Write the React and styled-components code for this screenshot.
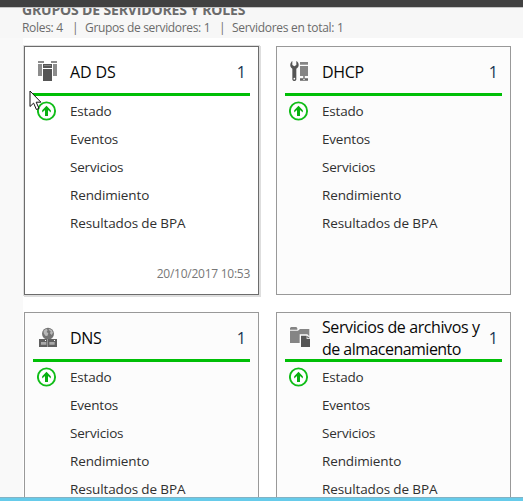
import React from "react";
import styled, { createGlobalStyle } from "styled-components";

const GlobalStyle = createGlobalStyle`
  * { box-sizing: border-box; }
  body { margin: 0; background: #fff; overflow: hidden; }
`;

const Window = styled.div`
  position: relative;
  width: 523px;
  height: 501px;
  overflow: hidden;
  display: flex;
  flex-direction: column;
  background: #fff;
  font-family: "Open Sans", "Noto Sans", sans-serif;
  white-space: nowrap;
`;

const TopBar = styled.div`
  flex: none;
  height: 8px;
  background: #414141;
  border-bottom: 1px solid #c4c4c4;
`;

const Header = styled.header`
  flex: none;
  height: 30px;
  padding-left: 22px;
  overflow: hidden;
  background: #f7f7f7;
  color: #6b6b6b;
`;

const Heading = styled.h1`
  margin: -8px 0 0;
  font-size: 14px;
  line-height: 20px;
  font-weight: 700;
  letter-spacing: -0.16px;
`;

const Summary = styled.div`
  display: flex;
  margin-top: -1px;
  font-size: 12px;
  line-height: 18px;
`;

const SummaryItem = styled.span`
  width: ${(p) => p.$width}px;
  letter-spacing: ${(p) => p.$spacing || 0}px;
`;

const Content = styled.main`
  flex: 1;
  min-height: 0;
  overflow: hidden;
  display: flex;
`;

const Gutter = styled.div`
  flex: none;
  width: 23px;
  background: #f9f9f9;
`;

const Grid = styled.div`
  display: grid;
  grid-template-columns: 235px 235px;
  grid-auto-rows: 249px;
  gap: 17px;
  padding: 8px 0 0 1px;
`;

const Card = styled.section`
  display: flex;
  flex-direction: column;
  padding: 0 8px;
  border: 1px solid ${(p) => (p.$selected ? "#6c6c6c" : "#999")};
  background: ${(p) => (p.$selected ? "#fff" : "#fcfcfc")};
  box-shadow: ${(p) => (p.$selected ? "0 0 0 1px #dedede, 1px 1px 0 1px #dedede" : "none")};
`;

const CardHeader = styled.div`
  flex: none;
  display: flex;
  align-items: center;
  height: 49px;
  padding: 0 4px 0 4px;
  border-bottom: 3px solid #00bf06;
  color: #080808;
`;

const RoleIcon = styled.svg`
  flex: none;
  width: 22px;
  height: 22px;
  margin: 2px 11px 0 0;
`;

const Title = styled.h2`
  flex: 1;
  margin: 4px 0 0;
  font-size: 16px;
  line-height: 22px;
  font-weight: 400;
`;

const TitleLine = styled.span`
  display: block;
  letter-spacing: ${(p) => p.$spacing}px;
`;

const Count = styled.span`
  margin-top: 4px;
  font-size: 16px;
  line-height: 22px;
  color: #173451;
`;

const Row = styled.div`
  flex: none;
  display: grid;
  grid-template-columns: 37px 1fr;
  align-items: center;
  height: 28px;
  font-size: 13.5px;
  color: #303030;
`;

const Rows = styled.div`
  padding-top: 1px;
`;

const RowText = styled.span`
  grid-column: 2;
  letter-spacing: ${(p) => p.$spacing}px;
`;

const StatusIcon = styled.svg`
  width: 20px;
  height: 20px;
  margin: -1px 0 0 4px;
`;

const Timestamp = styled.time`
  margin: 28px 0 0;
  text-align: right;
  font-size: 12px;
  line-height: 18px;
  letter-spacing: -0.26px;
  color: #777;
`;

const BottomBar = styled.div`
  flex: none;
  height: 4px;
  background: #66cbea;
  border-top: 1px solid #83b3c4;
`;

const Pointer = styled.svg`
  position: absolute;
  left: 29px;
  top: 90px;
  width: 13px;
  height: 21px;
`;

const DirectoryIcon = () => (
  <RoleIcon viewBox="0 0 66 66">
    <path fill="#8c8c8c" d="M3 3h18v6H3zM42 3h18v6H42zM3 12h12v36H3zM48 12h12v36H48z" />
    <path fill="#555" d="M18 9h27v15H18zM18 27h27v36H18z" />
    <path fill="#fff" d="M18 9h27v3H18zM18 24h27v3H18z" />
    <path fill="#858585" d="M21 15h21v3H21z" />
  </RoleIcon>
);

const DhcpIcon = () => (
  <RoleIcon viewBox="0 0 66 66">
    <path fill="#555" d="M10 3v12l6 4 6-4V3c5 3 7 7 7 12 0 5-3 9-7 11v32c0 7-12 7-12 0V26c-5-3-7-7-6-13 1-4 3-8 6-10z" />
    <circle cx="16" cy="56" r="2.5" fill="#fff" />
    <path fill="#858585" d="M33 6h24v8H33zM33 18h24v30H33z" />
    <path fill="#666" d="M43 48h4v7h10v7H33v-7h10z" />
    <path fill="#fff" d="M43 56h4v4h-4z" />
  </RoleIcon>
);

const DnsIcon = () => (
  <RoleIcon viewBox="0 0 66 66">
    <circle cx="33" cy="23" r="18" fill="#747474" />
    <path fill="#b8b8b8" d="M20 14l8-6 4 4-3 6 5 4-3 8-6-1-5-7zM36 8l8 4 4 8-4 7-5-5 2-6-6-4z" />
    <path fill="#606060" d="M6 39h54v24H6z" />
    <path fill="#aaa" d="M12 48h16v8H12zM37 48h16v8H37z" />
    <path fill="#fff" d="M24 42h3v3h-3zM51 42h3v3h-3zM32 39h1v24h-1z" />
  </RoleIcon>
);

const StorageIcon = () => (
  <RoleIcon viewBox="0 0 66 66">
    <path fill="#858585" d="M6 3h16l3 4v4H3V6zM3 14h24l6-5h28v42H3z" />
    <path fill="#fcfcfc" d="M32 25h23l11 11v30H32z" />
    <path fill="#555" d="M36 29h17v10h10v24H36z" />
    <path fill="#666" d="M55 29l8 8h-8z" />
  </RoleIcon>
);

const RunningIcon = () => (
  <StatusIcon viewBox="0 0 20 20">
    <circle cx="9.5" cy="10" r="8.6" fill="#fff" stroke="#10bd18" strokeWidth="1.9" />
    <path fill="#08b010" d="M9.5 4.8l4.3 4.4v2.2L11 9v6H8V9l-2.8 2.4V9.2z" />
  </StatusIcon>
);

const ROWS = [
  ["Estado", -0.2],
  ["Eventos", -0.2],
  ["Servicios", -0.2],
  ["Rendimiento", -0.13],
  ["Resultados de BPA", -0.12],
];

const ROLES = [
  {
    id: "adds",
    lines: [["AD DS", -0.1]],
    Icon: DirectoryIcon,
    selected: true,
    time: "20/10/2017 10:53",
  },
  { id: "dhcp", lines: [["DHCP", -0.3]], Icon: DhcpIcon },
  { id: "dns", lines: [["DNS", -0.3]], Icon: DnsIcon },
  {
    id: "storage",
    lines: [
      ["Servicios de archivos y", -0.4],
      ["de almacenamiento", -0.53],
    ],
    Icon: StorageIcon,
  },
];

function RoleCard({ role }) {
  const { Icon } = role;
  return (
    <Card $selected={role.selected}>
      <CardHeader>
        <Icon />
        <Title>
          {role.lines.map(([text, spacing]) => (
            <TitleLine key={text} $spacing={spacing}>{text}</TitleLine>
          ))}
        </Title>
        <Count>1</Count>
      </CardHeader>
      <Rows>
        {ROWS.map(([label, spacing], i) => (
          <Row key={label}>
            {i === 0 && <RunningIcon />}
            <RowText $spacing={spacing}>{label}</RowText>
          </Row>
        ))}
      </Rows>
      {role.time && <Timestamp>{role.time}</Timestamp>}
    </Card>
  );
}

export default function App() {
  return (
    <Window>
      <GlobalStyle />
      <TopBar />
      <Header>
        <Heading>GRUPOS DE SERVIDORES Y ROLES</Heading>
        <Summary>
          <SummaryItem $width={50} $spacing={-0.3}>Roles: 4</SummaryItem>
          <SummaryItem $width={13}>|</SummaryItem>
          <SummaryItem $width={134} $spacing={-0.34}>Grupos de servidores: 1</SummaryItem>
          <SummaryItem $width={13}>|</SummaryItem>
          <SummaryItem $width={120} $spacing={-0.3}>Servidores en total: 1</SummaryItem>
        </Summary>
      </Header>
      <Content>
        <Gutter />
        <Grid>
          {ROLES.map((role) => (
            <RoleCard key={role.id} role={role} />
          ))}
        </Grid>
      </Content>
      <BottomBar />
      <Pointer viewBox="0 0 13 21">
        <path
          d="M1 1v15.5l3.6-3.4 2.8 6.4 2.6-1.1-2.8-6.2h4.7z"
          fill="#fff"
          stroke="#111"
          strokeWidth="1"
        />
      </Pointer>
    </Window>
  );
}
